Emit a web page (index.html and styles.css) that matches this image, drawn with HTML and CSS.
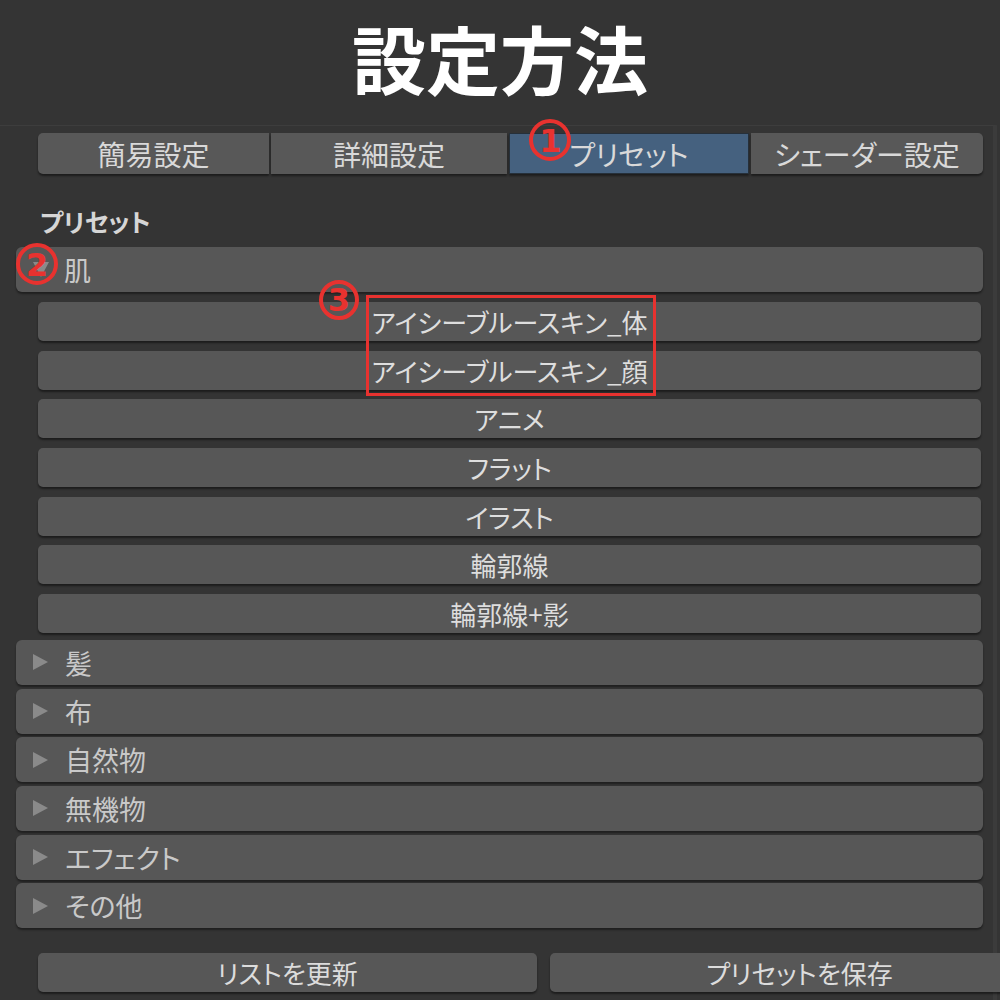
FILE: index.html
```html
<!DOCTYPE html>
<html lang="ja">
<head>
<meta charset="utf-8">
<title>設定方法</title>
<link rel="stylesheet" href="styles.css">
</head>
<body>
<div class="page">
  <h1 class="title">設定方法</h1>
  <div class="panel">
    <div class="tabs">
      <div class="tab">簡易設定</div>
      <div class="tab">詳細設定</div>
      <div class="tab active">プリセット</div>
      <div class="tab">シェーダー設定</div>
    </div>
    <div class="heading">プリセット</div>
    <div class="tree">
      <div class="cat"><span class="arrow down"></span><span class="cat-label">肌</span></div>
      <div class="sub">
        <div class="item">アイシーブルースキン_体</div>
        <div class="item">アイシーブルースキン_顔</div>
        <div class="item">アニメ</div>
        <div class="item">フラット</div>
        <div class="item">イラスト</div>
        <div class="item">輪郭線</div>
        <div class="item">輪郭線+影</div>
      </div>
      <div class="cats">
        <div class="cat"><span class="arrow"></span><span class="cat-label">髪</span></div>
        <div class="cat"><span class="arrow"></span><span class="cat-label">布</span></div>
        <div class="cat"><span class="arrow"></span><span class="cat-label">自然物</span></div>
        <div class="cat"><span class="arrow"></span><span class="cat-label">無機物</span></div>
        <div class="cat"><span class="arrow"></span><span class="cat-label">エフェクト</span></div>
        <div class="cat"><span class="arrow"></span><span class="cat-label">その他</span></div>
      </div>
    </div>
    <div class="actions">
      <div class="btn">リストを更新</div>
      <div class="btn">プリセットを保存</div>
    </div>
  </div>

  <svg class="mark mark-1" width="48" height="48" viewBox="0 0 48 48">
    <circle cx="24" cy="24" r="19" fill="none" stroke="#e8322f" stroke-width="4"/>
    <text x="24.5" y="35.5" text-anchor="middle" class="mark-num">1</text>
  </svg>
  <svg class="mark mark-2" width="48" height="48" viewBox="0 0 48 48">
    <circle cx="24" cy="24" r="19" fill="none" stroke="#e8322f" stroke-width="4"/>
    <text x="24" y="35.5" text-anchor="middle" class="mark-num">2</text>
  </svg>
  <svg class="mark mark-3" width="48" height="48" viewBox="0 0 48 48">
    <circle cx="24" cy="24" r="18" fill="none" stroke="#e8322f" stroke-width="4"/>
    <text x="24" y="35" text-anchor="middle" class="mark-num">3</text>
  </svg>
  <div class="highlight"></div>
</div>
</body>
</html>
```
FILE: styles.css
```css
html, body {
  margin: 0;
  padding: 0;
  background: #343434;
}
body {
  width: 1000px;
  height: 1000px;
  overflow: hidden;
  font-family: "Noto Sans CJK JP", "Noto Sans", sans-serif;
  font-feature-settings: "palt";
  color: #dedede;
}
.page {
  position: relative;
  width: 1000px;
  height: 1000px;
  overflow: hidden;
}
.title {
  margin: 0;
  height: 125px;
  box-sizing: border-box;
  padding-top: 17px;
  font-size: 74px;
  line-height: 80px;
  font-weight: 700;
  color: #ffffff;
  text-align: center;
  letter-spacing: 0;
}
.panel {
  border-top: 1px solid #3d3d3d;
  border-right: 4px solid #3b3b3b;
  width: 997px;
  box-sizing: border-box;
  padding-top: 7px;
  height: 875px;
}
.tabs {
  margin-left: 38px;
  width: 945px;
  height: 41px;
  display: grid;
  grid-template-columns: 231px 236px 240px 1fr;
  gap: 2px;
}
.tab {
  background: #585858;
  display: flex;
  align-items: center;
  justify-content: center;
  font-size: 28px;
  color: #d9d9d9;
  box-shadow: 0 2px 2px rgba(0,0,0,0.45);
}
.tab:first-child { border-radius: 5px 0 0 5px; }
.tab:last-child { border-radius: 0 5px 5px 0; }
.tab.active {
  background: #45617f;
  box-shadow: inset 0 0 0 1px #26303a, 0 2px 2px rgba(0,0,0,0.45);
}
.heading {
  margin: 30px 0 9px 40px;
  height: 34px;
  line-height: 34px;
  font-size: 25px;
  font-weight: 700;
  color: #d6d6d6;
}
.tree {
  margin-left: 16px;
  width: 967px;
}
.cats {
  display: flex;
  flex-direction: column;
  gap: 3.67px;
}
.cat {
  height: 45px;
  background: #575757;
  border-radius: 6px;
  display: flex;
  align-items: center;
  padding-left: 17px;
  box-shadow: 0 2px 2px rgba(0,0,0,0.4);
}
.cat-label {
  margin-left: 17px;
  font-size: 27px;
  color: #c9c9c9;
}
.arrow {
  width: 0;
  height: 0;
  border-left: 15px solid #8a8a8a;
  border-top: 8.5px solid transparent;
  border-bottom: 8.5px solid transparent;
}
.arrow.down {
  border-left: 8.5px solid transparent;
  border-right: 8.5px solid transparent;
  border-top: 15px solid #8a8a8a;
  border-bottom: 0;
  margin-right: -2px;
}
.sub {
  margin-left: 22px;
  width: 943px;
  padding: 10px 0 7px;
  display: flex;
  flex-direction: column;
  gap: 9.67px;
}
.item {
  height: 39px;
  background: #575757;
  border-radius: 5px;
  display: flex;
  align-items: center;
  justify-content: center;
  font-size: 26px;
  color: #dedede;
  box-shadow: 0 2px 2px rgba(0,0,0,0.45);
}
.actions {
  margin-top: 24.5px;
  margin-left: 38px;
  display: flex;
  gap: 13px;
}
.btn {
  flex: 0 0 499px;
  height: 39px;
  background: #575757;
  border-radius: 5px;
  display: flex;
  align-items: center;
  justify-content: center;
  font-size: 26px;
  color: #dcdcdc;
  box-shadow: 0 2px 2px rgba(0,0,0,0.45);
}
.mark {
  position: absolute;
}
.mark-num {
  font-family: "DejaVu Sans", "Liberation Sans", sans-serif;
  font-size: 32px;
  font-weight: 700;
  fill: #e8322f;
}
.mark-1 { left: 526px; top: 116px; }
.mark-2 { left: 13px; top: 240px; }
.mark-3 { left: 315px; top: 276px; }
.highlight {
  position: absolute;
  left: 366px;
  top: 295px;
  width: 290px;
  height: 101px;
  box-sizing: border-box;
  border: 3px solid #e8322f;
}
```
